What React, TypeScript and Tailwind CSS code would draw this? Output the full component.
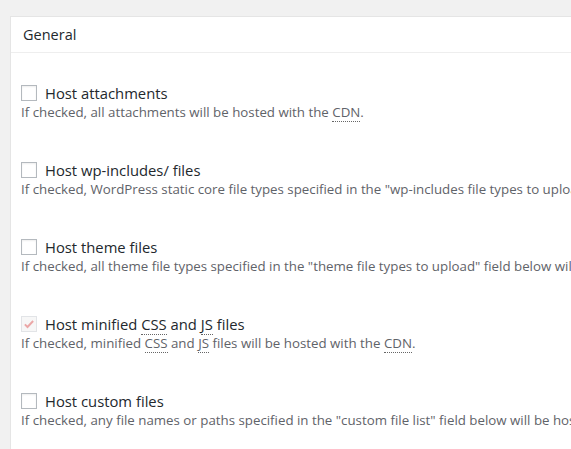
import React from "react";

type Item = {
  label: React.ReactNode;
  desc: React.ReactNode;
  checked?: boolean;
};

function Abbr({ children }: { children: React.ReactNode }) {
  return (
    <span className="border-b border-dotted border-[#666]">{children}</span>
  );
}

const items: Item[] = [
  {
    label: "Host attachments",
    desc: (
      <>
        If checked, all attachments will be hosted with the <Abbr>CDN</Abbr>.
      </>
    ),
  },
  {
    label: "Host wp-includes/ files",
    desc: 'If checked, WordPress static core file types specified in the "wp-includes file types to upload" field below will be hosted with the CDN.',
  },
  {
    label: "Host theme files",
    desc: 'If checked, all theme file types specified in the "theme file types to upload" field below will be hosted with the CDN.',
  },
  {
    label: (
      <>
        Host minified <Abbr>CSS</Abbr> and <Abbr>JS</Abbr> files
      </>
    ),
    desc: (
      <>
        If checked, minified <Abbr>CSS</Abbr> and <Abbr>JS</Abbr> files will be
        hosted with the <Abbr>CDN</Abbr>.
      </>
    ),
    checked: true,
  },
  {
    label: "Host custom files",
    desc: 'If checked, any file names or paths specified in the "custom file list" field below will be hosted with the CDN.',
  },
];

function Checkbox({ checked }: { checked?: boolean }) {
  if (checked) {
    return (
      <span className="flex h-4 w-4 shrink-0 items-center justify-center border border-[#e2e4e7] bg-[#f7f7f7]">
        <svg viewBox="0 0 16 16" className="h-3 w-3">
          <path
            d="M2.5 8.5 L6 12 L13.5 4"
            fill="none"
            stroke="#eba7a7"
            strokeWidth="2.6"
          />
        </svg>
      </span>
    );
  }
  return (
    <span className="block h-4 w-4 shrink-0 border border-[#b4b9be] bg-white shadow-[inset_0_1px_2px_rgba(0,0,0,0.07)]" />
  );
}

export default function App() {
  return (
    <div
      className="h-[449px] w-[571px] overflow-hidden bg-[#f1f1f1] pl-[10px] pt-4"
      style={{ fontFamily: '"Open Sans", "Noto Sans", sans-serif' }}
    >
      <div className="min-h-[460px] w-[640px] border border-[#e5e5e5] bg-white">
        <div className="flex h-[36px] items-center border-b border-[#eeeeee] px-3 pt-[1px] text-[14.5px] text-[#23282d]">
          General
        </div>
        <div className="flex flex-col gap-[39px] px-[10px] pt-[30px]">
          {items.map((it, i) => (
            <div key={i} className="flex flex-col">
              <label className="flex h-5 items-center gap-2 whitespace-nowrap text-[14.8px] text-[#23282d]">
                <Checkbox checked={it.checked} />
                <span>{it.label}</span>
              </label>
              <p className="h-[18px] whitespace-nowrap text-[13.3px] leading-[18px] text-[#5f6369]">
                {it.desc}
              </p>
            </div>
          ))}
        </div>
      </div>
    </div>
  );
}
